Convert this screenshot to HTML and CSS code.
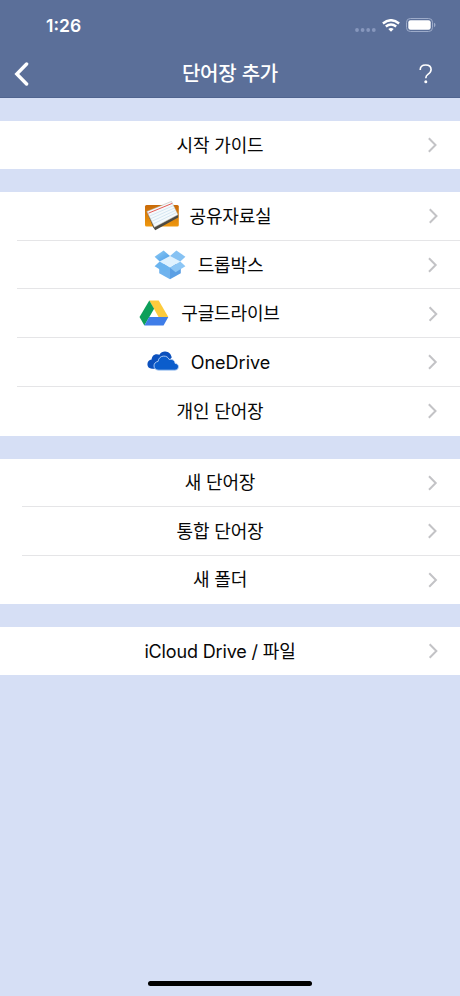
FILE: index.html
```html
<!DOCTYPE html>
<html lang="ko">
<head>
<meta charset="utf-8">
<title>단어장 추가</title>
<link rel="stylesheet" href="styles.css">
</head>
<body>
<svg class="defs" width="0" height="0" aria-hidden="true">
  <symbol id="chevron" viewBox="0 0 10 16" preserveAspectRatio="xMaxYMid meet"><path d="M1.3 1.3 8 8l-6.7 6.7" fill="none" stroke="#c3c3c6" stroke-width="2"/></symbol>
</svg>
<div class="screen">
  <header class="header">
    <div class="status">
      <span class="time">1:26</span>
      <div class="indicators">
        <svg class="signal" width="21" height="4" viewBox="0 0 21 4" fill="#8797bd"><circle cx="2" cy="2" r="1.9"/><circle cx="7.6" cy="2" r="1.9"/><circle cx="13.2" cy="2" r="1.9"/><circle cx="18.8" cy="2" r="1.9"/></svg>
        <svg class="wifi" width="18" height="13" viewBox="0 0 18 13" fill="none" stroke="#fff" stroke-width="2.4"><path d="M.9 4.5Q9-2.1 17.1 4.5"/><path d="M3.8 7.5q5.2-4.2 10.4 0"/><path d="M9 12.7 6.3 10q2.7-2.1 5.4 0z" fill="#fff" stroke="none"/></svg>
        <svg class="battery" width="30" height="14" viewBox="0 0 30 14"><rect x=".5" y=".5" width="26" height="13" rx="3.8" fill="none" stroke="#9dabc9"/><rect x="2.3" y="2.3" width="22.4" height="9.4" rx="2.2" fill="#fff"/><path d="M28 4.8q1.5.6 1.5 2.2T28 9.2z" fill="#9dabc9"/></svg>
      </div>
    </div>
    <nav class="nav">
      <svg class="back" width="16" height="24" viewBox="0 0 16 24"><path d="M12.6 2 2.8 12l9.8 10" fill="none" stroke="#fff" stroke-width="3.4" stroke-linecap="round"/></svg>
      <h1 class="title">단어장 추가</h1>
      <svg class="help" width="14" height="20" viewBox="0 0 14 20"><path d="M1.2 6C1.2 2.8 3.5 1 6.7 1s5.4 1.8 5.4 4.6c0 2.4-1.3 3.6-3.2 4.8-1.7 1.1-2.1 1.8-2.1 3.9" fill="none" stroke="#fff" stroke-width="1.6"/><circle cx="6.8" cy="17.7" r="1.5" fill="#fff"/></svg>
    </nav>
  </header>
  <main class="groups">
    <section class="group one">
      <div class="row"><span class="label">시작 가이드</span><svg class="arrow"><use href="#chevron"/></svg></div>
    </section>
    <section class="group five">
      <div class="row">
        <span class="icon"><svg width="36" height="30" viewBox="0 0 36 30">
          <defs><linearGradient id="folder" x2="0" y2="1"><stop stop-color="#c96a08"/><stop offset="1" stop-color="#ef980e"/></linearGradient></defs>
          <rect x="1" y="4" width="33.8" height="21.5" rx="1.5" fill="url(#folder)"/>
          <path d="m2.8 10.5 6.4 15.8 2 3L34.2 16.5v-3z" fill="#4d4a42"/>
          <path d="m2.8 10.4 7.6 15.8L34 13.7 27.5.4z" fill="#f5fafc" stroke="#b3ada0" stroke-width=".5"/>
          <path d="M4.4 12.2 28.2 2.4" stroke="#e65b55" stroke-width="1"/>
          <path d="m5.7 15 23.7-10.3M7 17.6 30.6 6.9M8.2 20.2 31.8 9.2M9.4 22.8 32.9 11.4" stroke="#c5dcec" stroke-width=".7"/>
        </svg></span>
        <span class="label">공유자료실</span><svg class="arrow"><use href="#chevron"/></svg>
      </div>
      <div class="row">
        <span class="icon dropbox"><svg width="32" height="30" viewBox="0 0 32 30">
          <defs><linearGradient id="box" x2="1" y2="1"><stop stop-color="#8fcdf5"/><stop offset="1" stop-color="#4b9ce8"/></linearGradient></defs>
          <path d="M5.2 14H16v15.3l-10.8-6z" fill="#70b3ee"/>
          <path d="M16 14h10.8v9.3l-10.8 6z" fill="#5b9fe4"/>
          <path d="m16 5.9 10.3 5.6L16 17.8 5.7 11.5z" fill="#dff2ff"/>
          <path d="M9.6.5 16 5.9 5.7 11.5.6 6.7z" fill="url(#box)"/>
          <path d="M22.4.5 16 5.9l10.3 5.6 5.1-4.8z" fill="#86c2f3"/>
          <path d="M5.7 11.5 16 17.8l-5.6 4.4L.6 16.2z" fill="#6bb4ef"/>
          <path d="m26.3 11.5 5.1 4.7-9.8 6-5.6-4.4z" fill="#8cc6f5"/>
        </svg></span>
        <span class="label">드롭박스</span><svg class="arrow"><use href="#chevron"/></svg>
      </div>
      <div class="row">
        <span class="icon drive"><svg width="30" height="26" viewBox="0 0 30 26">
          <path d="M10.3.5h9.4L29.3 17h-9.7z" fill="#fdcb3d"/>
          <path d="m10.3.5 4.8 8.3L5.4 25.5.5 17z" fill="#0d9f5a"/>
          <path d="M10.2 17h19.1l-4.8 8.5H5.4z" fill="#3f7de8"/>
        </svg></span>
        <span class="label">구글드라이브</span><svg class="arrow"><use href="#chevron"/></svg>
      </div>
      <div class="row">
        <span class="icon onedrive"><svg width="32" height="20" viewBox="0 0 32 20">
          <path d="M5 17.7C2 17.7.4 16 .4 13.3S2.1 9 4.6 8.6C4.8 5.2 7 3.1 9.8 3.2c1 0 1.9.2 2.6.6C13.8 1.5 15.8.4 18.2.5c3.5.1 6 2.5 6.5 6.1L15 18z" fill="#0b50bd"/>
          <path d="M11.8 19.2c-3 0-4.8-1.8-4.8-4.3 0-2.3 1.5-4.1 4.1-4.5.4-3.3 2.7-5.3 5.7-5.3 2.5 0 4.4 1.2 5.4 3.4 3.1-.7 5.6 1 5.9 3.9 2.1.2 3.4 1.5 3.4 3.3 0 2-1.5 3.5-3.7 3.5z" fill="#0b5dcc" stroke="#b9d4f6" stroke-width=".9"/>
        </svg></span>
        <span class="label latin">OneDrive</span><svg class="arrow"><use href="#chevron"/></svg>
      </div>
      <div class="row"><span class="label">개인 단어장</span><svg class="arrow"><use href="#chevron"/></svg></div>
    </section>
    <section class="group three">
      <div class="row"><span class="label">새 단어장</span><svg class="arrow"><use href="#chevron"/></svg></div>
      <div class="row"><span class="label">통합 단어장</span><svg class="arrow"><use href="#chevron"/></svg></div>
      <div class="row"><span class="label">새 폴더</span><svg class="arrow"><use href="#chevron"/></svg></div>
    </section>
    <section class="group one">
      <div class="row"><span class="label">iCloud Drive / 파일</span><svg class="arrow"><use href="#chevron"/></svg></div>
    </section>
  </main>
  <div class="home"></div>
</div>
</body>
</html>
```

FILE: styles.css
```css
* { box-sizing: border-box; }
body { margin: 0; }
svg { display: block; flex: none; }
.defs { position: absolute; }

.screen {
  width: 460px;
  height: 996px;
  display: flex;
  flex-direction: column;
  background: #d6dff5;
  color: #080808;
  font-family: Inter, "Noto Sans CJK KR", sans-serif;
}

.header {
  height: 98px;
  background: #5b6f99;
  border-bottom: 1px solid #50648f;
  color: #fff;
}
.status {
  height: 50px;
  padding: 0 24px 0 46px;
  display: flex;
  align-items: center;
  justify-content: space-between;
}
.time { padding-top: 1px; font-size: 17.5px; font-weight: 600; }
.indicators { display: flex; align-items: center; }
.signal { margin: 9px 6px 0 0; }
.wifi { margin-right: 6px; }

.nav {
  height: 47px;
  padding: 0 27px 0 14px;
  display: grid;
  grid-template-columns: 1fr auto 1fr;
  align-items: center;
}
.title {
  margin: 0 0 0 13px;
  font-size: 20px;
  line-height: 30px;
  font-weight: 500;
  letter-spacing: -.2px;
}
.back, .help { margin-top: 1px; }
.help { justify-self: end; }

.groups { padding-top: 23px; display: flex; flex-direction: column; gap: 23px; }
.group { background: #fff; display: grid; grid-template-columns: minmax(0, 1fr); grid-auto-rows: 1fr; }
.one { height: 48px; }
.five { height: 243.5px; --inset: 17px; }
.three { height: 145.5px; --inset: 22px; }

.row {
  display: flex;
  align-items: center;
  padding: 0 22px 0 2px;
}
.row:not(:last-child) {
  background: linear-gradient(#e5e5e7, #e5e5e7) var(--inset) 100% / 100% 1px no-repeat;
}
.row::before { content: ""; flex: 1; }
.label {
  padding-top: 1px;
  font-size: 18px;
  line-height: 28px;
  letter-spacing: -.15px;
  white-space: nowrap;
}
.latin { letter-spacing: 0; }
.arrow { flex: 1; min-width: 0; height: 16px; }
.icon { width: 45px; margin-left: -24px; }
.dropbox { width: 44px; margin-left: -23px; }
.drive { width: 42px; margin-left: -21px; padding-bottom: 2px; }
.onedrive { width: 44px; margin-left: -23px; padding-bottom: 2px; }

.home {
  width: 164px;
  height: 5px;
  margin: auto auto 10px;
  border-radius: 3px;
  background: #000;
}
```
